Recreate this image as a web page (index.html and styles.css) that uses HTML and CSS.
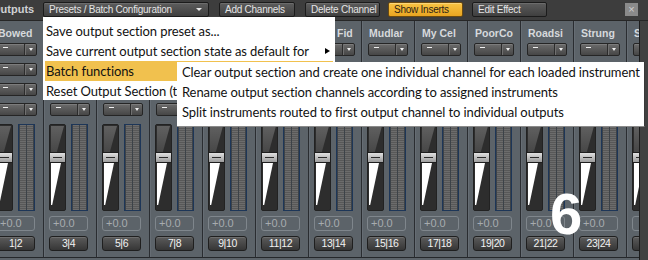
FILE: index.html
```html
<!DOCTYPE html>
<html>
<head>
<meta charset="utf-8">
<link rel="stylesheet" href="styles.css">
</head>
<body>
<div class="app">
  <div class="topbar">
    <div class="title">Outputs</div>
    <div class="btn presets">Presets / Batch Configuration<i class="btri"></i></div>
    <div class="btn add">Add Channels</div>
    <div class="btn del">Delete Channel</div>
    <div class="btn show">Show Inserts</div>
    <div class="btn edit">Edit Effect</div>
    <div class="close">×</div>
  </div>
  <div class="main">
    <div class="strips">
      <div class="ch first"><div class="name">Bowed</div><div class="dd"><span class="ddm"><i class="dash"></i></span><span class="dda"><i class="tri"></i></span></div><div class="dd"><span class="ddm"><i class="dash"></i></span><span class="dda"><i class="tri"></i></span></div><div class="dd"><span class="ddm"><i class="dash"></i></span><span class="dda"><i class="tri"></i></span></div><div class="dd"><span class="ddm"><i class="dash"></i></span><span class="dda"><i class="tri"></i></span></div><div class="strip"><div class="fader"><div class="knob"></div></div><div class="meter"><div class="mc"></div><div class="mc"></div></div></div><div class="val">+0.0</div><div class="lbl">1|2</div></div>
      <div class="ch"><div class="name"></div><div class="dd"><span class="ddm"><i class="dash"></i></span><span class="dda"><i class="tri"></i></span></div><div class="dd"><span class="ddm"><i class="dash"></i></span><span class="dda"><i class="tri"></i></span></div><div class="dd"><span class="ddm"><i class="dash"></i></span><span class="dda"><i class="tri"></i></span></div><div class="dd"><span class="ddm"><i class="dash"></i></span><span class="dda"><i class="tri"></i></span></div><div class="strip"><div class="fader"><div class="knob"></div></div><div class="meter"><div class="mc"></div><div class="mc"></div></div></div><div class="val">+0.0</div><div class="lbl">3|4</div></div>
      <div class="ch"><div class="name"></div><div class="dd"><span class="ddm"><i class="dash"></i></span><span class="dda"><i class="tri"></i></span></div><div class="dd"><span class="ddm"><i class="dash"></i></span><span class="dda"><i class="tri"></i></span></div><div class="dd"><span class="ddm"><i class="dash"></i></span><span class="dda"><i class="tri"></i></span></div><div class="dd"><span class="ddm"><i class="dash"></i></span><span class="dda"><i class="tri"></i></span></div><div class="strip"><div class="fader"><div class="knob"></div></div><div class="meter"><div class="mc"></div><div class="mc"></div></div></div><div class="val">+0.0</div><div class="lbl">5|6</div></div>
      <div class="ch"><div class="name"></div><div class="dd"><span class="ddm"><i class="dash"></i></span><span class="dda"><i class="tri"></i></span></div><div class="dd"><span class="ddm"><i class="dash"></i></span><span class="dda"><i class="tri"></i></span></div><div class="dd"><span class="ddm"><i class="dash"></i></span><span class="dda"><i class="tri"></i></span></div><div class="dd"><span class="ddm"><i class="dash"></i></span><span class="dda"><i class="tri"></i></span></div><div class="strip"><div class="fader"><div class="knob"></div></div><div class="meter"><div class="mc"></div><div class="mc"></div></div></div><div class="val">+0.0</div><div class="lbl">7|8</div></div>
      <div class="ch"><div class="name"></div><div class="dd"><span class="ddm"><i class="dash"></i></span><span class="dda"><i class="tri"></i></span></div><div class="dd"><span class="ddm"><i class="dash"></i></span><span class="dda"><i class="tri"></i></span></div><div class="dd"><span class="ddm"><i class="dash"></i></span><span class="dda"><i class="tri"></i></span></div><div class="dd"><span class="ddm"><i class="dash"></i></span><span class="dda"><i class="tri"></i></span></div><div class="strip"><div class="fader"><div class="knob"></div></div><div class="meter"><div class="mc"></div><div class="mc"></div></div></div><div class="val">+0.0</div><div class="lbl">9|10</div></div>
      <div class="ch"><div class="name"></div><div class="dd"><span class="ddm"><i class="dash"></i></span><span class="dda"><i class="tri"></i></span></div><div class="dd"><span class="ddm"><i class="dash"></i></span><span class="dda"><i class="tri"></i></span></div><div class="dd"><span class="ddm"><i class="dash"></i></span><span class="dda"><i class="tri"></i></span></div><div class="dd"><span class="ddm"><i class="dash"></i></span><span class="dda"><i class="tri"></i></span></div><div class="strip"><div class="fader"><div class="knob"></div></div><div class="meter"><div class="mc"></div><div class="mc"></div></div></div><div class="val">+0.0</div><div class="lbl">11|12</div></div>
      <div class="ch"><div class="name fid">Fid</div><div class="dd"><span class="ddm"><i class="dash"></i></span><span class="dda"><i class="tri"></i></span></div><div class="dd"><span class="ddm"><i class="dash"></i></span><span class="dda"><i class="tri"></i></span></div><div class="dd"><span class="ddm"><i class="dash"></i></span><span class="dda"><i class="tri"></i></span></div><div class="dd"><span class="ddm"><i class="dash"></i></span><span class="dda"><i class="tri"></i></span></div><div class="strip"><div class="fader"><div class="knob"></div></div><div class="meter"><div class="mc"></div><div class="mc"></div></div></div><div class="val">+0.0</div><div class="lbl">13|14</div></div>
      <div class="ch"><div class="name">Mudlar</div><div class="dd"><span class="ddm"><i class="dash"></i></span><span class="dda"><i class="tri"></i></span></div><div class="dd"><span class="ddm"><i class="dash"></i></span><span class="dda"><i class="tri"></i></span></div><div class="dd"><span class="ddm"><i class="dash"></i></span><span class="dda"><i class="tri"></i></span></div><div class="dd"><span class="ddm"><i class="dash"></i></span><span class="dda"><i class="tri"></i></span></div><div class="strip"><div class="fader"><div class="knob"></div></div><div class="meter"><div class="mc"></div><div class="mc"></div></div></div><div class="val">+0.0</div><div class="lbl">15|16</div></div>
      <div class="ch"><div class="name">My Cel</div><div class="dd"><span class="ddm"><i class="dash"></i></span><span class="dda"><i class="tri"></i></span></div><div class="dd"><span class="ddm"><i class="dash"></i></span><span class="dda"><i class="tri"></i></span></div><div class="dd"><span class="ddm"><i class="dash"></i></span><span class="dda"><i class="tri"></i></span></div><div class="dd"><span class="ddm"><i class="dash"></i></span><span class="dda"><i class="tri"></i></span></div><div class="strip"><div class="fader"><div class="knob"></div></div><div class="meter"><div class="mc"></div><div class="mc"></div></div></div><div class="val">+0.0</div><div class="lbl">17|18</div></div>
      <div class="ch"><div class="name">PoorCo</div><div class="dd"><span class="ddm"><i class="dash"></i></span><span class="dda"><i class="tri"></i></span></div><div class="dd"><span class="ddm"><i class="dash"></i></span><span class="dda"><i class="tri"></i></span></div><div class="dd"><span class="ddm"><i class="dash"></i></span><span class="dda"><i class="tri"></i></span></div><div class="dd"><span class="ddm"><i class="dash"></i></span><span class="dda"><i class="tri"></i></span></div><div class="strip"><div class="fader"><div class="knob"></div></div><div class="meter"><div class="mc"></div><div class="mc"></div></div></div><div class="val">+0.0</div><div class="lbl">19|20</div></div>
      <div class="ch"><div class="name">Roadsi</div><div class="dd"><span class="ddm"><i class="dash"></i></span><span class="dda"><i class="tri"></i></span></div><div class="dd"><span class="ddm"><i class="dash"></i></span><span class="dda"><i class="tri"></i></span></div><div class="dd"><span class="ddm"><i class="dash"></i></span><span class="dda"><i class="tri"></i></span></div><div class="dd"><span class="ddm"><i class="dash"></i></span><span class="dda"><i class="tri"></i></span></div><div class="strip"><div class="fader"><div class="knob"></div></div><div class="meter"><div class="mc"></div><div class="mc"></div></div></div><div class="val">+0.0</div><div class="lbl">21|22</div></div>
      <div class="ch"><div class="name">Strung</div><div class="dd"><span class="ddm"><i class="dash"></i></span><span class="dda"><i class="tri"></i></span></div><div class="dd"><span class="ddm"><i class="dash"></i></span><span class="dda"><i class="tri"></i></span></div><div class="dd"><span class="ddm"><i class="dash"></i></span><span class="dda"><i class="tri"></i></span></div><div class="dd"><span class="ddm"><i class="dash"></i></span><span class="dda"><i class="tri"></i></span></div><div class="strip"><div class="fader"><div class="knob"></div></div><div class="meter"><div class="mc"></div><div class="mc"></div></div></div><div class="val">+0.0</div><div class="lbl">23|24</div></div>
      <div class="ch"><div class="name">S</div><div class="dd"><span class="ddm"><i class="dash"></i></span><span class="dda"><i class="tri"></i></span></div><div class="dd"><span class="ddm"><i class="dash"></i></span><span class="dda"><i class="tri"></i></span></div><div class="dd"><span class="ddm"><i class="dash"></i></span><span class="dda"><i class="tri"></i></span></div><div class="dd"><span class="ddm"><i class="dash"></i></span><span class="dda"><i class="tri"></i></span></div><div class="strip"><div class="fader"><div class="knob"></div></div><div class="meter"><div class="mc"></div><div class="mc"></div></div></div><div class="val"></div><div class="lbl"></div></div>
    </div>
    <div class="edge"></div>
  </div>

  <div class="menu">
    <div class="mi">Save output section preset as...</div>
    <div class="mi sub">Save current output section state as default for<i class="mtri"></i></div>
    <div class="mi hl">Batch functions</div>
    <div class="mi">Reset Output Section (t</div>
  </div>
  <div class="submenu">
    <div class="mi">Clear output section and create one individual channel for each loaded instrument</div>
    <div class="mi">Rename output section channels according to assigned instruments</div>
    <div class="mi">Split instruments routed to first output channel to individual outputs</div>
  </div>
  <div class="step">6</div>
</div>
</body>
</html>
```
FILE: styles.css
```css
html, body {
  margin: 0;
  padding: 0;
}
body {
  width: 648px;
  height: 260px;
  overflow: hidden;
  background: #5c6369;
  font-family: "Liberation Sans", Arial, sans-serif;
}
.app {
  position: relative;
  width: 648px;
  height: 260px;
  overflow: hidden;
}

/* ---------- top bar ---------- */
.topbar {
  height: 21px;
  box-sizing: border-box;
  background: #3d3d3d;
  border-bottom: 1px solid #262626;
  display: flex;
  align-items: flex-start;
  padding-top: 2px;
}
.title {
  width: 43px;
  flex: none;
  overflow: hidden;
  font-weight: bold;
  font-size: 11px;
  line-height: 15px;
  color: #cfd1d3;
  white-space: nowrap;
  text-indent: -8px;
}
.btn {
  flex: none;
  box-sizing: border-box;
  height: 15px;
  border: 1px solid #1b1b1b;
  border-radius: 2px;
  background: linear-gradient(#5d5d5d, #3f3f3f);
  box-shadow: inset 0 1px 0 #6c6c6c;
  color: #e4e4e4;
  font-size: 10px;
  letter-spacing: -0.25px;
  line-height: 13px;
  padding-left: 5px;
  white-space: nowrap;
  overflow: hidden;
  position: relative;
}
.presets { width: 166px; }
.add { width: 76px; margin-left: 10px; }
.del { width: 75px; margin-left: 10px; }
.show {
  width: 75px;
  margin-left: 8px;
  background: linear-gradient(#f8c444, #e9a521);
  box-shadow: inset 0 1px 0 #fbd67a;
  border-color: #6b4a10;
  color: #2b2314;
}
.edit { width: 75px; margin-left: 9px; }
.btri {
  position: absolute;
  right: 6px;
  top: 5px;
  border-left: 3px solid transparent;
  border-right: 3px solid transparent;
  border-top: 3px solid #e8e8e8;
}
.close {
  margin-left: auto;
  margin-right: 10px;
  margin-top: 1px;
  width: 13px;
  height: 13px;
  background: #8a8a8a;
  color: #cfcfcf;
  font-size: 11px;
  line-height: 12px;
  text-align: center;
}

/* ---------- mixer ---------- */
.main {
  display: flex;
  height: 239px;
}
.strips {
  flex: 1;
  display: flex;
  overflow: hidden;
}
.edge {
  width: 8px;
  flex: none;
  background: #414141;
  border-left: 1px solid #1c1c1c;
}
.ch {
  flex: none;
  width: 53px;
  height: 237px;
  box-sizing: border-box;
  border-left: 1px solid #2a2d31;
  border-bottom: 1px solid #24272a;
  box-shadow: inset 1px 0 0 #666d74;
  padding: 5px 0 0 5px;
  display: flex;
  flex-direction: column;
}
.ch.first { margin-left: -10px; }
.name {
  height: 14px;
  font-weight: bold;
  font-size: 10.5px;
  line-height: 14px;
  color: #d6d9dc;
  padding-left: 2px;
  white-space: nowrap;
  overflow: hidden;
  width: 40px;
}
.name.fid { padding-left: 23px; width: 19px; }
.dd {
  margin: 3px 0 4px 1px;
  width: 40px;
  height: 13px;
  box-sizing: border-box;
  border: 1px solid #252525;
  border-radius: 2px;
  background: linear-gradient(#6b6b6b, #464646);
  box-shadow: inset 0 1px 0 #7c7c7c;
  display: flex;
}
.dd + .dd { margin-top: 3px; }
.ddm {
  flex: 1;
  padding: 3px 0 0 5px;
}
.dash {
  display: block;
  width: 5px;
  height: 1px;
  background: #f0f0f0;
}
.dda {
  width: 11px;
  border-left: 1px solid #2c2c2c;
  box-shadow: inset 1px 0 0 #707070;
  display: flex;
  align-items: center;
  justify-content: center;
}
.tri {
  display: block;
  border-left: 2.5px solid transparent;
  border-right: 2.5px solid transparent;
  border-top: 3px solid #f0f0f0;
}
.strip {
  margin-top: 4px;
  height: 87px;
  display: flex;
  gap: 5px;
}
.fader {
  position: relative;
  width: 17px;
  height: 87px;
  box-sizing: border-box;
  background: #2d2d2d;
  border: 1px solid #222;
  border-radius: 2px;
}
.fader::before {
  content: "";
  position: absolute;
  left: 1px;
  top: 1px;
  width: 13px;
  height: 26px;
  background: linear-gradient(#606060, #474747);
  clip-path: polygon(0 0, 100% 0, 45% 100%, 0 100%);
}
.fader::after {
  content: "";
  position: absolute;
  left: 1px;
  top: 38px;
  width: 10px;
  height: 42px;
  background: #ffffff;
  clip-path: polygon(0 0, 100% 0, 12% 100%, 0 100%);
}
.knob {
  position: absolute;
  left: -1px;
  top: 27px;
  width: 17px;
  height: 11px;
  box-sizing: border-box;
  border: 1px solid #1e1e1e;
  border-radius: 1px;
  background: linear-gradient(#e0e0e0, #9d9d9d);
}
.knob::after {
  content: "";
  position: absolute;
  left: 3px;
  right: 3px;
  top: 4px;
  height: 1px;
  background: #2a2a2a;
}
.meter {
  width: 17px;
  height: 87px;
  box-sizing: border-box;
  border: 1px solid #1d3658;
  background: #3c4248;
  display: flex;
  gap: 1px;
  padding: 0 1px;
}
.mc {
  flex: 1;
  background: repeating-linear-gradient(#6c6c6c 0 1px, #585858 1px 2px);
}
.val {
  margin-top: 5px;
  width: 39px;
  height: 15px;
  box-sizing: border-box;
  border: 1px solid #7f868c;
  border-radius: 3px;
  color: #a7abaf;
  font-size: 11px;
  line-height: 13px;
  padding-left: 3px;
}
.lbl {
  margin-top: 5px;
  width: 39px;
  height: 15px;
  box-sizing: border-box;
  border: 1px solid #1f1f1f;
  border-radius: 3px;
  background: linear-gradient(#5b5b5b, #363636);
  box-shadow: inset 0 1px 0 #6d6d6d;
  color: #f2f2f2;
  font-size: 10.5px;
  line-height: 13px;
  text-align: center;
  letter-spacing: -0.4px;
}

/* ---------- menus ---------- */
.menu {
  position: absolute;
  left: 43px;
  top: 17px;
  width: 292px;
  height: 83px;
  box-sizing: border-box;
  background: #ffffff;
  padding-top: 4px;
}
.submenu {
  position: absolute;
  left: 177px;
  top: 62px;
  width: 468px;
  height: 65px;
  box-sizing: border-box;
  background: #ffffff;
  border-right: 1px solid #3a3a3a;
  border-bottom: 1px solid #8a8a8a;
}
.mi {
  height: 20px;
  line-height: 20px;
  font-family: Lato, "Open Sans", sans-serif;
  font-size: 13px;
  letter-spacing: -0.1px;
  color: #111111;
  padding-left: 4px;
  white-space: nowrap;
  overflow: hidden;
}
.menu .mi { padding-left: 3px; }
.mi.sub {
  display: flex;
  align-items: center;
  justify-content: space-between;
  padding-right: 5px;
}
.mtri {
  display: block;
  border-top: 3.5px solid transparent;
  border-bottom: 3.5px solid transparent;
  border-left: 5px solid #000;
}
.mi.hl {
  margin: 0 2px;
  padding-left: 1px;
  background: #f1c14e;
}
.submenu .mi { padding-left: 5px; }

.step {
  position: absolute;
  left: 550px;
  top: 192px;
  font-family: "Liberation Sans", Arial, sans-serif;
  font-weight: bold;
  font-size: 58px;
  line-height: 44px;
  color: #ffffff;
}
```
